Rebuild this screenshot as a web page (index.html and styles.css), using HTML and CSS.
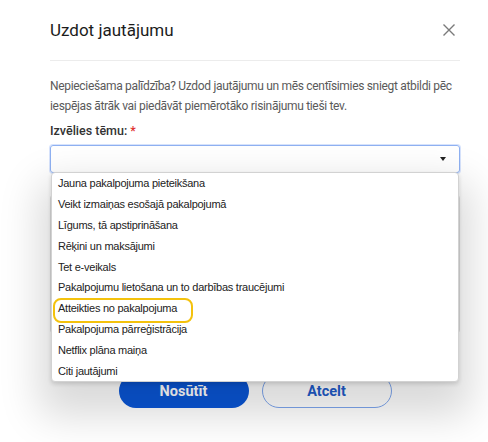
FILE: index.html
```html
<!DOCTYPE html>
<html lang="lv">
<head>
<meta charset="utf-8">
<title>Uzdot jautājumu</title>
<link rel="stylesheet" href="styles.css">
</head>
<body>
<div class="modal">
  <header class="modal-head">
    <h1 class="title">Uzdot jautājumu</h1>
    <button class="close" aria-label="Aizvērt">
      <svg width="14" height="14" viewBox="0 0 14 14"><path d="M1.5 1.5L12.5 12.5M12.5 1.5L1.5 12.5" stroke="#7a7a7a" stroke-width="1.4" fill="none"/></svg>
    </button>
  </header>
  <div class="modal-body">
    <p class="intro">Nepieciešama palīdzība? Uzdod jautājumu un mēs centīsimies sniegt atbildi pēc iespējas ātrāk vai piedāvāt piemērotāko risinājumu tieši tev.</p>
    <div class="field">
      <label class="label">Izvēlies tēmu: <span class="req">*</span></label>
      <div class="select-wrap">
        <div class="select">
          <span class="caret"></span>
        </div>
        <ul class="dropdown">
          <li>Jauna pakalpojuma pieteikšana</li>
          <li>Veikt izmaiņas esošajā pakalpojumā</li>
          <li>Līgums, tā apstiprināšana</li>
          <li>Rēķini un maksājumi</li>
          <li>Tet e-veikals</li>
          <li>Pakalpojumu lietošana un to darbības traucējumi</li>
          <li class="marked">Atteikties no pakalpojuma</li>
          <li>Pakalpojuma pārreģistrācija</li>
          <li>Netflix plāna maiņa</li>
          <li>Citi jautājumi</li>
        </ul>
      </div>
    </div>
    <div class="field hidden-field">
      <div class="textarea"></div>
    </div>
    <div class="actions">
      <button class="btn primary">Nosūtīt</button>
      <button class="btn secondary">Atcelt</button>
    </div>
  </div>
</div>
</body>
</html>
```
FILE: styles.css
```css
* { box-sizing: border-box; }
html, body { margin: 0; padding: 0; background: #fff; }
body {
  width: 488px;
  height: 442px;
  overflow: hidden;
  font-family: Roboto, "Liberation Sans", Arial, sans-serif;
}
.modal {
  padding: 0 28px 0 50px;
}
.modal-head {
  height: 61px;
  display: flex;
  align-items: center;
  justify-content: space-between;
  border-bottom: 1px solid #ececec;
  padding-bottom: 1px;
}
.title {
  margin: 0;
  font-size: 17px;
  font-weight: 400;
  color: #1c1c1c;
}
.close {
  border: 0;
  background: none;
  padding: 0;
  margin-right: 4px;
  width: 14px;
  height: 14px;
  display: flex;
}
.modal-body {
  padding-top: 15px;
}
.intro {
  margin: 0 -2px 0 0;
  font-size: 12px;
  letter-spacing: -0.32px;
  line-height: 20px;
  color: #5a5a5a;
}
.field {
  margin-top: 6px;
}
.label {
  display: block;
  font-size: 12.5px;
  line-height: 18px;
  font-weight: 500;
  color: #333;
  margin-bottom: 5px;
}
.req { color: #e0312f; }
.select-wrap {
  position: relative;
}
.select {
  height: 28px;
  border: 1px solid #8fb1f2;
  border-radius: 3px;
  box-shadow: 0 0 0 1px rgba(140, 175, 245, 0.35);
  display: flex;
  align-items: center;
  justify-content: flex-end;
  padding-right: 13px;
}
.caret {
  width: 0;
  height: 0;
  border-left: 3.5px solid transparent;
  border-right: 3.5px solid transparent;
  border-top: 4px solid #222;
}
.dropdown {
  position: absolute;
  top: 27px;
  left: 1px;
  right: 1px;
  margin: 0;
  padding: 0;
  list-style: none;
  background: #fff;
  border: 1px solid #d2d2d2;
  border-radius: 4px;
  box-shadow: 0 22px 40px 12px rgba(0, 0, 0, 0.15), 0 2px 4px rgba(0, 0, 0, 0.14);
  z-index: 5;
  font-family: "Liberation Sans", Arial, sans-serif;
  font-size: 11px;
  letter-spacing: -0.25px;
  color: #222;
}
.dropdown li {
  height: 20.8px;
  display: flex;
  align-items: center;
  padding-left: 6px;
  position: relative;
}
.dropdown li.marked::after {
  content: "";
  position: absolute;
  left: 1px;
  top: 0;
  width: 136px;
  height: 21px;
  border: 2px solid #f4c20d;
  border-radius: 8px;
}
.hidden-field {
  margin-top: 22px;
}
.textarea {
  height: 138px;
  border: 1px solid #e2e2e2;
  border-radius: 3px;
}
.actions {
  display: flex;
  justify-content: center;
  gap: 13px;
  margin-top: 41px;
}
.btn {
  width: 130px;
  height: 34px;
  border-radius: 17px;
  font-family: Roboto, "Liberation Sans", Arial, sans-serif;
  font-size: 14.5px;
  font-weight: 700;
  padding: 0;
}
.primary {
  background: #0a56d6;
  color: #fff;
  border: 0;
}
.secondary {
  background: #fff;
  color: #1f5cc9;
  border: 1.5px solid #7ea6ee;
}
```
